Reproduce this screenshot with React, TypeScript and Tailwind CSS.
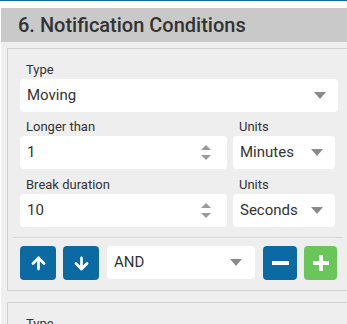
import React from 'react';
import { ArrowUp, ArrowDown } from 'lucide-react';

const Caret = () => (
  <svg width="12" height="7" viewBox="0 0 12 7" className="shrink-0">
    <path d="M0 0 L12 0 L6 7 Z" fill="#8a8a8a" />
  </svg>
);

const Spinner = () => (
  <svg width="10" height="15" viewBox="0 0 10 15" className="shrink-0">
    <path d="M0 5 L10 5 L5 0 Z" fill="#9a9a9a" />
    <path d="M0 10 L10 10 L5 15 Z" fill="#9a9a9a" />
  </svg>
);

const Label = ({ children }: { children: React.ReactNode }) => (
  <div className="h-[18px] pl-[6px] text-[13px] leading-[18px] text-[#333]">{children}</div>
);

const SelectBox = ({ value, className }: { value: string; className?: string }) => (
  <div className={`flex h-[33px] items-center justify-between rounded-[4px] bg-white pl-[7px] pr-[12px] text-[15px] text-[#333] ${className ?? ''}`}>
    <span>{value}</span>
    <Caret />
  </div>
);

const NumberBox = ({ value }: { value: string }) => (
  <div className="flex h-[33px] w-[207px] items-center justify-between rounded-[4px] bg-white pl-[7px] pr-[16px] text-[15px] text-[#333]">
    <span>{value}</span>
    <Spinner />
  </div>
);

export default function App() {
  return (
    <div className="h-[324px] w-[347px] overflow-hidden bg-white font-['Roboto',sans-serif]">
      <div className="h-px bg-[#0b6aa2]" />
      <div className="ml-px mt-[7px] h-[400px] bg-[#efefef]">
        <div className="flex h-[34px] items-center bg-[#c9c9c9] pl-[17px] text-[20px] font-medium text-[#333]">
          6. Notification Conditions
        </div>

        <div className="pl-[6px] pt-[6px]">
          {/* condition card */}
          <div className="w-[400px] border border-r-0 border-[#d0d0d0] bg-[#eeeeee] pb-[10px] pl-[12px] pt-[12px]">
            <div className="w-[318px]">
              <Label>Type</Label>
              <SelectBox value="Moving" />

              <div className="mt-[6px] flex gap-[6px]">
                <div>
                  <Label>Longer than</Label>
                  <NumberBox value="1" />
                </div>
                <div>
                  <Label>Units</Label>
                  <SelectBox value="Minutes" className="w-[102px]" />
                </div>
              </div>

              <div className="mt-[7px] flex gap-[6px]">
                <div>
                  <Label>Break duration</Label>
                  <NumberBox value="10" />
                </div>
                <div>
                  <Label>Units</Label>
                  <SelectBox value="Seconds" className="w-[102px]" />
                </div>
              </div>
            </div>

            <div className="-ml-[7px] mt-[10px] h-px w-[330px] bg-[#d8d8d8]" />

            <div className="mt-[8px] flex items-start">
              <button className="flex h-[34px] w-[36px] items-center justify-center rounded-[4px] bg-[#0b6aa2]">
                <ArrowUp size={19} strokeWidth={3.4} color="white" />
              </button>
              <button className="ml-[7px] flex h-[34px] w-[36px] items-center justify-center rounded-[4px] bg-[#0b6aa2]">
                <ArrowDown size={19} strokeWidth={3.4} color="white" />
              </button>
              <SelectBox value="AND" className="ml-[8px] h-[32px] w-[148px] pl-[6px] pr-[13px]" />
              <button className="ml-[8px] flex h-[34px] w-[34px] items-center justify-center rounded-[4px] bg-[#0b6aa2]">
                <span className="block h-[4px] w-[17px] bg-white" />
              </button>
              <button className="ml-[7px] flex h-[34px] w-[33px] items-center justify-center rounded-[4px] bg-[#6bc65a]">
                <svg width="16" height="16" viewBox="0 0 16 16">
                  <rect x="6" y="0" width="4" height="16" fill="white" />
                  <rect x="0" y="6" width="16" height="4" fill="white" />
                </svg>
              </button>
            </div>
          </div>

          {/* next card */}
          <div className="mt-[11px] w-[400px] border border-r-0 border-[#d0d0d0] bg-[#eeeeee] pl-[12px] pt-[12px]">
            <Label>Type</Label>
            <SelectBox value="Moving" className="w-[318px]" />
          </div>
        </div>
      </div>
    </div>
  );
}
